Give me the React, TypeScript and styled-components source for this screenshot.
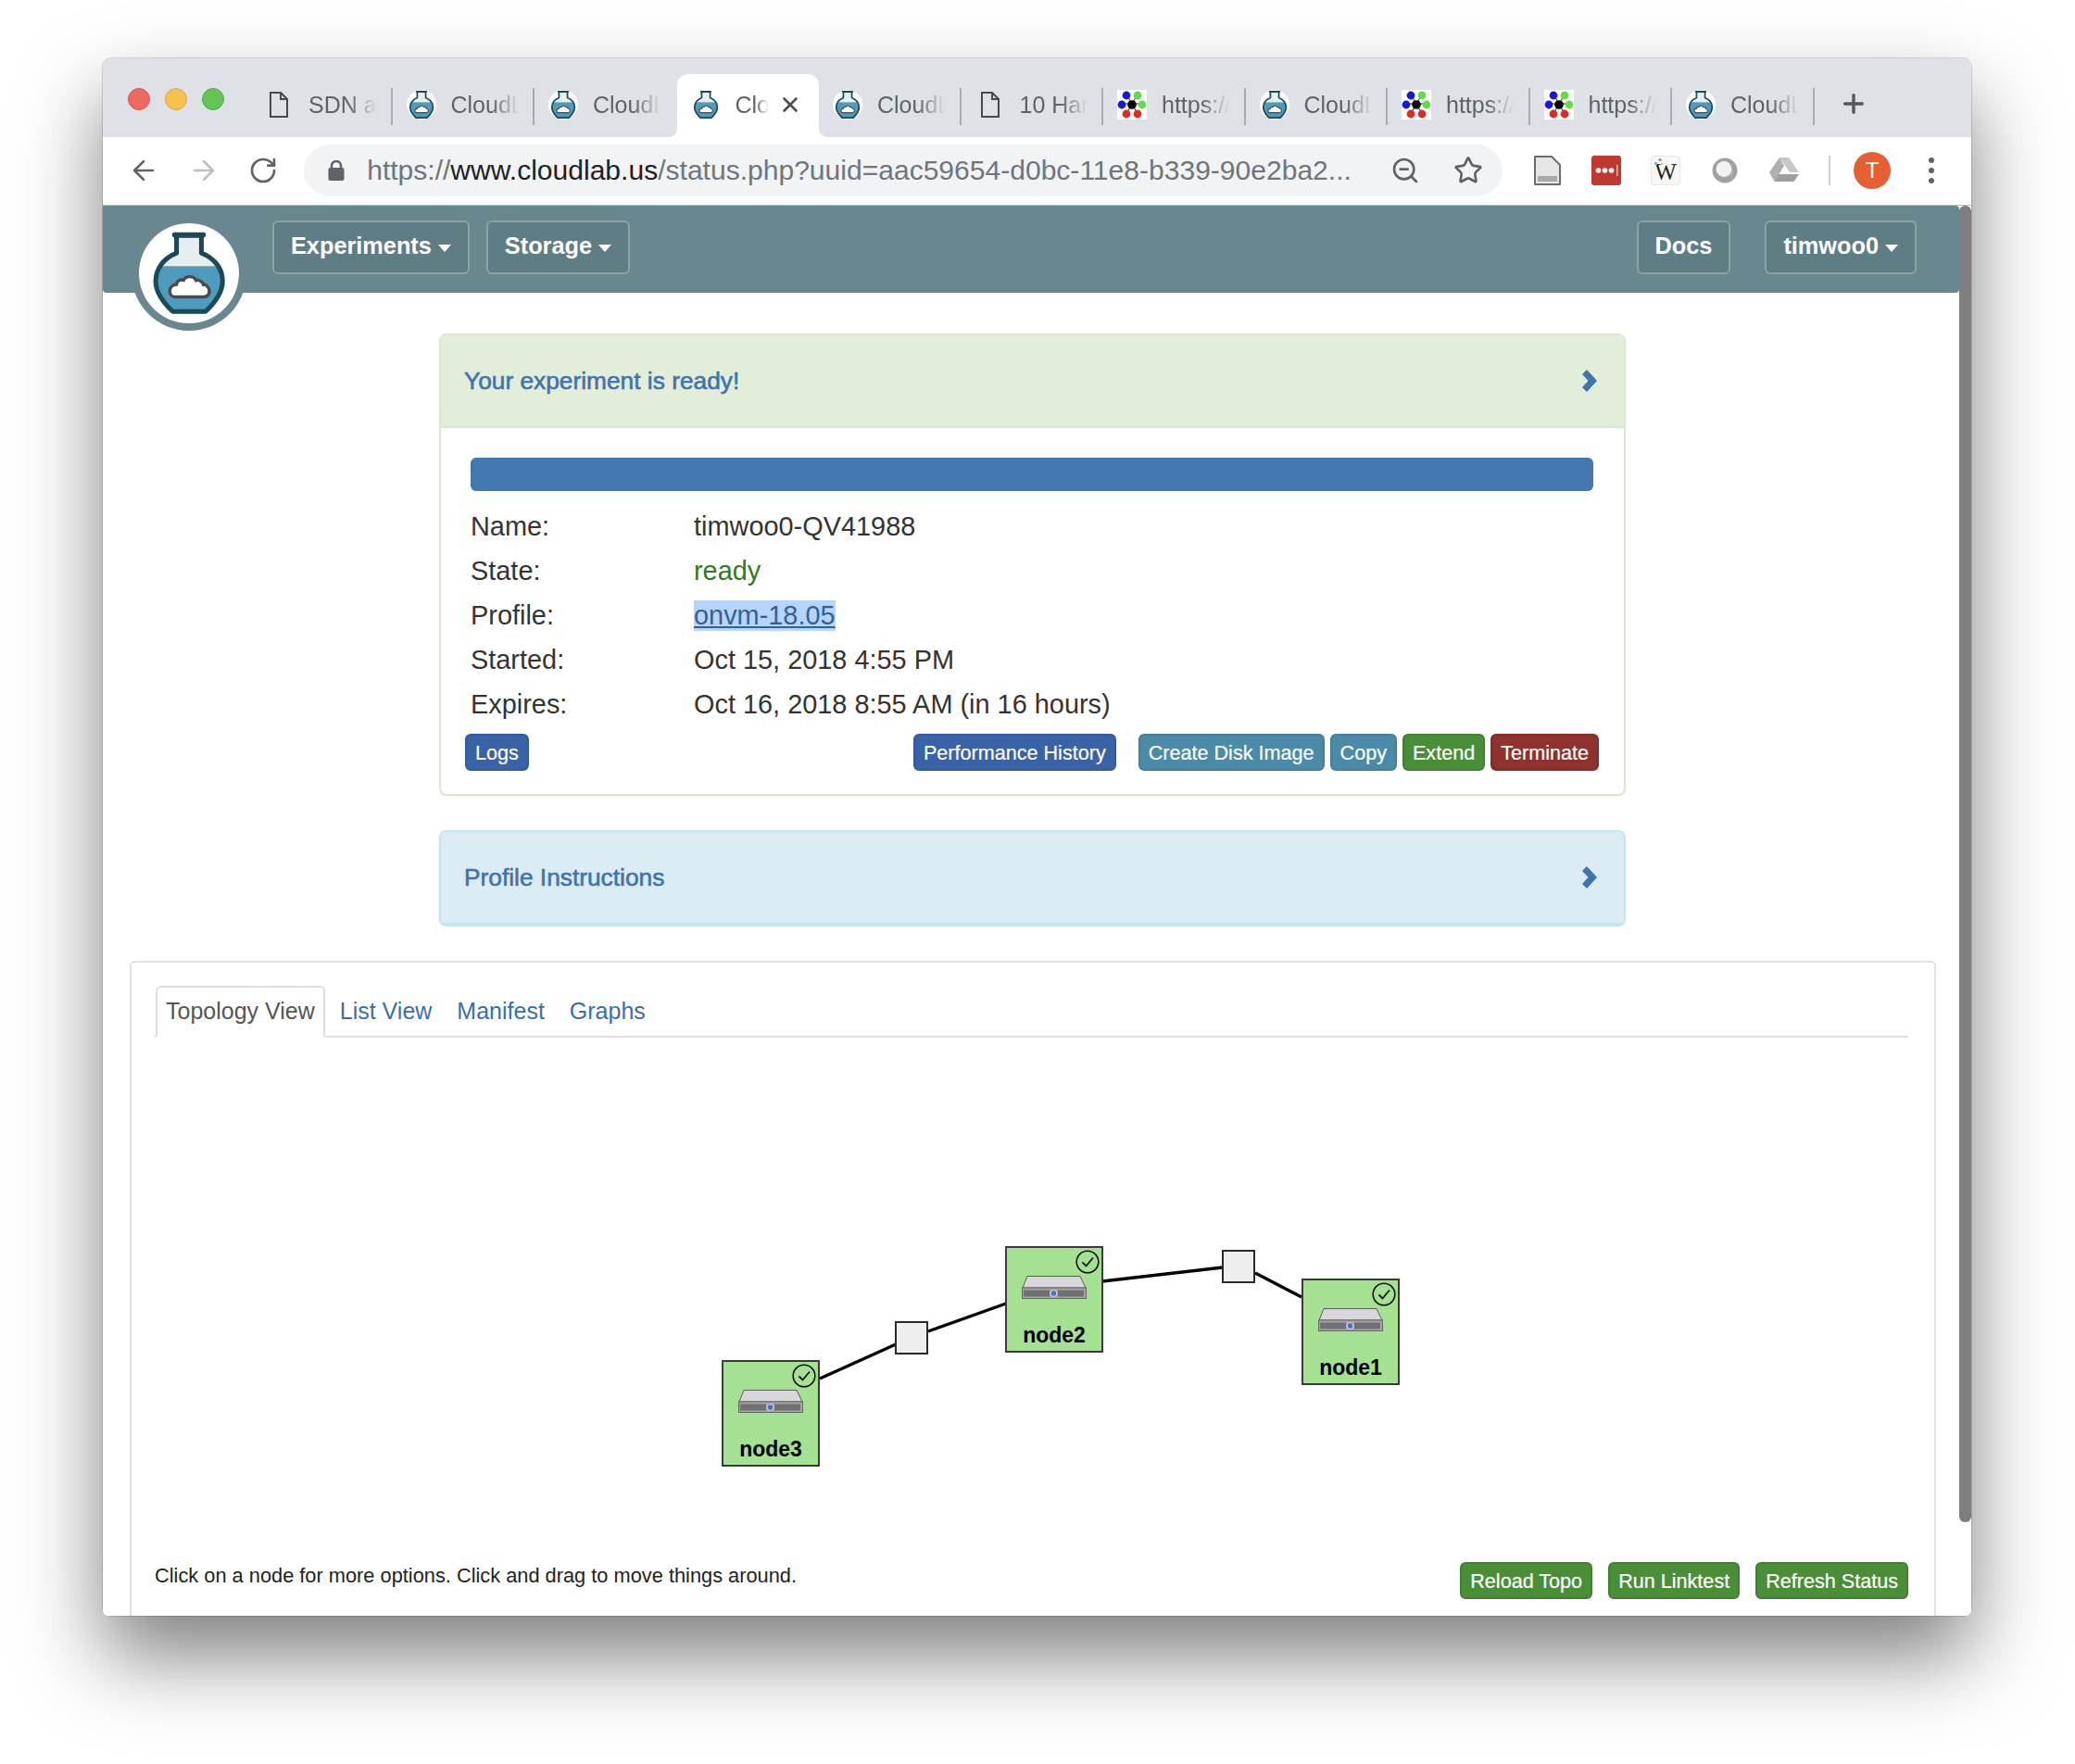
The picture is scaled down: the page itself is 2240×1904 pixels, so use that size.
import React from "react";
import styled, { createGlobalStyle } from "styled-components";
import { ArrowLeft, ArrowRight, RotateCw, ZoomOut, Star, X, Plus } from "lucide-react";

const Global = createGlobalStyle`
  html, body { margin: 0; padding: 0; background: #fff; }
  body { font-family: "Liberation Sans", Arial, sans-serif; color: #333; overflow: hidden; }
`;

const Stage = styled.div`
  width: 2240px;
  height: 1904px;
  padding: 63px 0 0 111px;
  box-sizing: border-box;
`;
const Win = styled.div`
  position: relative;
  width: 2017px;
  height: 1681px;
  border-radius: 10px 10px 6px 6px;
  overflow: hidden;
  display: flex;
  flex-direction: column;
`;
const WinShadow = styled.div`
  width: 2017px;
  height: 1681px;
  border-radius: 10px;
  box-shadow: 0 44px 88px rgba(0, 0, 0, 0.5), 0 0 0 1px rgba(0, 0, 0, 0.14);
`;

/* ---------- tab strip ---------- */
const TabStrip = styled.div`
  height: 85px;
  flex: none;
  background: #dee1e6;
  display: flex;
  align-items: flex-end;
  padding-left: 159px;
  position: relative;
`;
const Lights = styled.div`
  position: absolute;
  left: 27px;
  top: 32px;
  display: flex;
  gap: 16px;
`;
const Light = styled.span<{ $c: string; $b: string }>`
  width: 24px;
  height: 24px;
  border-radius: 50%;
  box-sizing: border-box;
  background: ${(p) => p.$c};
  border: 1px solid ${(p) => p.$b};
`;
const Tab = styled.div<{ $active?: boolean; $sep?: boolean }>`
  position: relative;
  width: 153.5px;
  height: 68px;
  flex: none;
  display: flex;
  align-items: center;
  padding: 0 0 2px 15px;
  box-sizing: border-box;
  background: ${(p) => (p.$active ? "#fff" : "transparent")};
  border-radius: 12px 12px 0 0;
  ${(p) =>
    p.$sep
      ? `&::after { content: ""; position: absolute; right: 0; top: 15px; width: 2px; height: 40px; background: #a9acb1; }`
      : ""}
  ${(p) =>
    p.$active
      ? `&::before { content: ""; position: absolute; left: -10px; right: -10px; bottom: 0; height: 12px;
          background:
            radial-gradient(circle at 0 0, #dee1e6 10px, #fff 10.5px) left bottom / 10px 10px no-repeat,
            radial-gradient(circle at 100% 0, #dee1e6 10px, #fff 10.5px) right bottom / 10px 10px no-repeat; }`
      : ""}
`;
const IconSlot = styled.span`
  width: 32px;
  height: 32px;
  flex: none;
  display: flex;
  align-items: center;
  justify-content: center;
  position: relative;
`;
const FavCircle = styled(IconSlot)`
  background: #fff;
  border-radius: 50%;
`;
const TabTitle = styled.span<{ $w: number }>`
  margin-left: 16px;
  width: ${(p) => p.$w}px;
  overflow: hidden;
  white-space: nowrap;
  font-size: 25px;
  line-height: 32px;
  color: #5f6368;
  position: relative;
  -webkit-mask-image: linear-gradient(to right, #000 60%, transparent 100%);
  mask-image: linear-gradient(to right, #000 60%, transparent 100%);
`;
const TabClose = styled.span`
  margin-left: 10px;
  display: flex;
  color: #4a4d52;
  position: relative;
`;
const NewTab = styled.span`
  width: 84px;
  height: 68px;
  display: flex;
  align-items: center;
  justify-content: center;
  padding-bottom: 4px;
  box-sizing: border-box;
  color: #54575c;
`;

/* ---------- toolbar ---------- */
const Toolbar = styled.div`
  height: 74px;
  flex: none;
  box-sizing: border-box;
  background: #fff;
  border-bottom: 1px solid #b9babc;
  display: flex;
  align-items: center;
  padding: 0 0 2px 12px;
`;
const NavSlot = styled.span<{ $dim?: boolean }>`
  width: 64.4px;
  flex: none;
  display: flex;
  justify-content: center;
  color: ${(p) => (p.$dim ? "#bcbec1" : "#5f6368")};
`;
const Omnibox = styled.div`
  margin-left: 12px;
  width: 1294px;
  height: 56px;
  flex: none;
  border-radius: 28px;
  background: #f1f3f4;
  display: flex;
  align-items: center;
  padding-left: 26px;
  box-sizing: border-box;
  color: #5f6368;
`;
const Url = styled.span`
  margin-left: 24px;
  width: 1087px;
  flex: none;
  white-space: nowrap;
  font-size: 30.05px;
  color: #70757a;
`;
const Domain = styled.span`
  color: #202124;
`;
const OmniIcon = styled.span`
  width: 68px;
  flex: none;
  display: flex;
  justify-content: center;
`;
const Extensions = styled.div`
  margin-left: 32px;
  display: flex;
  align-items: center;
  gap: 32px;
`;
const ExtDivider = styled.span`
  width: 2px;
  height: 32px;
  background: #cfd0d2;
`;
const Tile = styled.span`
  position: relative;
  width: 32px;
  height: 32px;
  box-sizing: border-box;
  padding-top: 4px;
  border: 1px solid #e7e7e3;
  border-radius: 4px;
  background: #f7f7f4;
  display: flex;
  align-items: center;
  justify-content: center;
  font-family: "Liberation Serif", serif;
  font-size: 25px;
  color: #222;
  &::before {
    content: "";
    position: absolute;
    left: 3px;
    top: 2px;
    width: 9px;
    height: 8px;
    background:
      radial-gradient(circle at 1.5px 5.5px, #6ec3e8 1.5px, transparent 2px),
      radial-gradient(circle at 6px 1.5px, #c77fc7 1.5px, transparent 2px),
      radial-gradient(circle at 8px 6px, #e8c76e 1.2px, transparent 1.7px);
  }
`;
const Avatar = styled.span`
  width: 40px;
  height: 40px;
  border-radius: 50%;
  background: #e55f33;
  color: #fff;
  font-size: 24px;
  display: flex;
  align-items: center;
  justify-content: center;
  margin-left: -7px;
`;
const Dots = styled.span`
  display: flex;
  flex-direction: column;
  gap: 5px;
  margin-left: 9px;
  & > i {
    width: 6px;
    height: 6px;
    border-radius: 50%;
    background: #5f6368;
  }
`;

/* ---------- page ---------- */
const Page = styled.div`
  flex: none;
  position: relative;
  width: 2004px;
  min-height: 0;
  background: #fff;
`;
const NavBar = styled.div`
  height: 94px;
  background: #68878f;
  border-radius: 0 4px 4px 4px;
  display: flex;
  align-items: flex-start;
  padding: 16px 46px 0 183px;
  box-sizing: border-box;
  gap: 18px;
`;
const NavBtn = styled.div`
  height: 58px;
  box-sizing: border-box;
  padding: 0 18px 3px;
  display: flex;
  align-items: center;
  gap: 7px;
  background: #5f7d85;
  border: 2px solid #8aa2a8;
  border-radius: 6px;
  color: #fff;
  font-size: 25.3px;
  font-weight: 700;
`;
const Caret = styled.i`
  width: 0;
  height: 0;
  margin-top: 4px;
  border-left: 7px solid transparent;
  border-right: 7px solid transparent;
  border-top: 8px solid #fff;
`;
const NavRight = styled.div`
  margin-left: auto;
  display: flex;
  gap: 37px;
`;
const LogoRing = styled.div`
  position: absolute;
  left: 31px;
  top: 11px;
  width: 124px;
  height: 124px;
  border-radius: 50%;
  background: #68878f;
  display: flex;
  align-items: center;
  justify-content: center;
`;
const LogoDisc = styled.div`
  width: 108px;
  height: 108px;
  border-radius: 50%;
  background: #fff;
  display: flex;
  align-items: center;
  justify-content: center;
`;
const Column = styled.div`
  width: 1281px;
  margin: 44px 0 0 363px;
`;
const Panel = styled.div<{ $tone: string }>`
  border: 2px solid ${(p) => p.$tone};
  border-radius: 8px;
  background: #fff;
  box-shadow: 0 1px 2px rgba(0, 0, 0, 0.05);
`;
const PanelHead = styled.div<{ $bg: string; $h: number }>`
  height: ${(p) => p.$h}px;
  background: ${(p) => p.$bg};
  border-radius: 6px 6px 0 0;
  display: flex;
  align-items: center;
  justify-content: space-between;
  padding: 0 29px 0 25px;
  box-sizing: border-box;
  color: #3f74ad;
  font-size: 26.3px;
  -webkit-text-stroke: 0.6px #3f74ad;
`;
const GreenHead = styled(PanelHead)`
  border-bottom: 2px solid #d9e8cc;
`;
const InfoPanel = styled(Panel)`
  margin-top: 37px;
  border-bottom-width: 4px;
`;
const PanelBody = styled.div`
  padding: 32px 33px 25px 32px;
`;
const Progress = styled.div`
  height: 36px;
  background: #4478b0;
  border-radius: 6px;
  margin-bottom: 14px;
`;
const Row = styled.div`
  display: grid;
  grid-template-columns: 241px 1fr;
  height: 48px;
  align-items: center;
  font-size: 28.9px;
  color: #333;
`;
const Ready = styled.span`
  color: #2e7d1a;
`;
const Selected = styled.a`
  justify-self: start;
  background: #b5d5fc;
  color: #34609a;
  text-decoration: underline;
  line-height: 33px;
`;
const ActionRow = styled.div`
  display: flex;
  gap: 6px;
  margin: 8px -6px 0 -6px;
`;
const Btn = styled.span<{ $bg: string; $edge: string }>`
  height: 40px;
  box-sizing: border-box;
  padding: 1px 9px 0;
  display: flex;
  align-items: center;
  justify-content: center;
  background: ${(p) => p.$bg};
  border: 2px solid ${(p) => p.$edge};
  border-radius: 6px;
  color: #fff;
  font-size: 21.6px;
  -webkit-text-stroke: 0.2px #fff;
  white-space: nowrap;
`;
const Spacer = styled.span<{ $w?: number }>`
  ${(p) => (p.$w ? `width: ${p.$w}px;` : "flex: 1;")}
`;
const TopoPanel = styled.div`
  margin: 37px 0 0 29px;
  width: 1950px;
  height: 800px;
  box-sizing: border-box;
  border: 2px solid #e1e1e1;
  border-radius: 6px;
  padding: 25px 28px 0 25px;
`;
const TabBar = styled.div`
  height: 56px;
  box-sizing: border-box;
  border-bottom: 2px solid #ddd;
  display: flex;
  font-size: 25px;
  padding-left: 1px;
`;
const PageTab = styled.span<{ $active?: boolean }>`
  height: 56px;
  box-sizing: border-box;
  padding: 0 9px 2px;
  margin-right: 5px;
  display: flex;
  align-items: center;
  border: 2px solid ${(p) => (p.$active ? "#ddd" : "transparent")};
  border-bottom-color: ${(p) => (p.$active ? "#fff" : "transparent")};
  border-radius: 6px 6px 0 0;
  color: ${(p) => (p.$active ? "#555" : "#3a6ea5")};
  background: ${(p) => (p.$active ? "#fff" : "transparent")};
`;
const Canvas = styled.div`
  position: relative;
  height: 566px;
`;
const Wires = styled.svg`
  position: absolute;
  inset: 0;
  width: 100%;
  height: 100%;
`;
const Node = styled.div<{ $x: number; $y: number }>`
  position: absolute;
  left: ${(p) => p.$x - 167}px;
  top: ${(p) => p.$y - 1120}px;
  width: 106px;
  height: 115px;
  box-sizing: border-box;
  background: #a4e192;
  border: 2px solid #3a3a3a;
  display: flex;
  flex-direction: column;
  align-items: center;
  padding-top: 30px;
`;
const NodeLabel = styled.span`
  margin-top: 25px;
  font-size: 23px;
  line-height: 28px;
  font-weight: 700;
  color: #000;
`;
const Check = styled.svg`
  position: absolute;
  right: 2px;
  top: 2px;
`;
const Lan = styled.div<{ $x: number; $y: number }>`
  position: absolute;
  left: ${(p) => p.$x - 167}px;
  top: ${(p) => p.$y - 1120}px;
  width: 36px;
  height: 36px;
  box-sizing: border-box;
  background: #eee;
  border: 2px solid #2a2a2a;
`;
const Footer = styled.div`
  display: flex;
  gap: 17px;
`;
const Hint = styled.span`
  flex: 1;
  font-size: 21.8px;
  line-height: 30px;
  color: #222;
`;
const ScrollThumb = styled.div`
  position: absolute;
  right: 0;
  top: 0;
  width: 13px;
  height: 1421px;
  background: #7f7f7f;
  border-radius: 6px;
`;
const PageRow = styled.div`
  flex: 1;
  min-height: 0;
  display: flex;
  position: relative;
  overflow: hidden;
  background: #fff;
`;

/* ---------- drawings ---------- */
const FLASK_D = "M182 98V155C140 172 115 205 115 245C115 280 135 310 170 343H275C310 310 330 280 330 245C330 205 305 172 262 155V98Z";

const Flask = ({ size }: { size: number }) => (
  <svg width={size} height={size} viewBox="82 80 280 280">
    <defs>
      <clipPath id="flask-body">
        <path d={FLASK_D} />
      </clipPath>
    </defs>
    <path d={FLASK_D} fill="#e8eeee" />
    <rect x="100" y="197" width="244" height="160" fill="#4e9bbd" clipPath="url(#flask-body)" />
    <path d={FLASK_D} fill="none" stroke="#1b4a56" strokeWidth="15" strokeLinejoin="round" />
    <rect x="168" y="88" width="108" height="17" rx="7" fill="#1b4a56" />
    <path d="M178 296H268C285 296 292 280 285 268C280 258 272 255 268 256C266 245 252 240 245 243C238 228 212 226 205 242C195 238 182 245 182 256C170 256 160 265 160 277C160 288 168 296 178 296Z" fill="#fff" stroke="#4a4a4a" strokeWidth="10" />
  </svg>
);

const FileIcon = () => (
  <svg width="20" height="28" viewBox="0 0 20 28" fill="none" stroke="#47494d" strokeWidth="2">
    <path d="M1 1H12L19 8V27H1Z" />
    <path d="M12 1V8H19" />
  </svg>
);

const NetIcon = () => (
  <svg width="32" height="32" viewBox="0 0 32 32">
    <rect width="32" height="32" fill="#fff" />
    <path d="M10 5L16 15L22 5M5 15H27M10 26L16 15L22 26" stroke="#222" strokeWidth="1" fill="none" />
    <circle cx="10" cy="6" r="4.4" fill="#1616e0" />
    <circle cx="22" cy="6" r="4.4" fill="#5fdc48" />
    <circle cx="5" cy="16" r="4.4" fill="#1616e0" />
    <circle cx="16" cy="16" r="4.8" fill="#000" />
    <circle cx="27" cy="16" r="4.4" fill="#5fdc48" />
    <circle cx="10" cy="26" r="4.4" fill="#e02a20" />
    <circle cx="22" cy="26" r="4.4" fill="#e02a20" />
  </svg>
);

const LockIcon = () => (
  <svg width="18" height="22" viewBox="0 0 18 22" fill="#5f6368">
    <rect x="0.5" y="8" width="17" height="14" rx="2" />
    <path d="M4 9V6a5 5 0 0 1 10 0v3" fill="none" stroke="#5f6368" strokeWidth="2.4" />
  </svg>
);

const Chevron = () => (
  <svg width="16" height="24" viewBox="0 0 16 24" fill="#3f74ad">
    <path d="M5 0L16 12L5 24L0 19L6.5 12L0 5Z" />
  </svg>
);

const Server = () => (
  <svg width="70" height="25" viewBox="0 0 70 25">
    <path d="M6 0.5H63L69 13H1Z" fill="#d9d7db" stroke="#5a5a5a" />
    <rect x="0.5" y="13" width="69" height="11.5" fill="#a6a6a6" stroke="#666" />
    <path
      d="M3 15.5v7M5 15.5v7M7 15.5v7M9 15.5v7M11 15.5v7M13 15.5v7M15 15.5v7M17 15.5v7M19 15.5v7M21 15.5v7M23 15.5v7M25 15.5v7M27 15.5v7M29 15.5v7M40 15.5v7M42 15.5v7M44 15.5v7M46 15.5v7M48 15.5v7M50 15.5v7M52 15.5v7M54 15.5v7M56 15.5v7M58 15.5v7M60 15.5v7M62 15.5v7M64 15.5v7M66 15.5v7"
      stroke="#3c3c3c"
      strokeWidth="1"
    />
    <circle cx="34.5" cy="19" r="3.4" fill="#4a66e0" stroke="#ddd" strokeWidth="1" />
  </svg>
);

const CheckMark = () => (
  <Check width="26" height="26" viewBox="0 0 26 26" fill="none" stroke="#111" strokeWidth="1.6">
    <circle cx="13" cy="13" r="11.8" />
    <path d="M7.5 13.5L11.5 17.5L19 8.5" strokeWidth="1.8" />
  </Check>
);

const DocExt = () => (
  <svg width="32" height="32" viewBox="0 0 32 32">
    <path d="M3 1H21L30 10V31H3Z" fill="#e6e6e6" stroke="#6c6c6c" strokeWidth="2" strokeLinejoin="round" />
    <rect x="6" y="22" width="21" height="6" fill="#a9a9a9" />
  </svg>
);
const PassExt = () => (
  <svg width="32" height="32" viewBox="0 0 32 32">
    <rect width="32" height="32" rx="3" fill="#c0392f" />
    <circle cx="7.5" cy="16" r="2.8" fill="#fff" />
    <circle cx="14.5" cy="16" r="2.8" fill="#fff" />
    <circle cx="21.5" cy="16" r="2.8" fill="#fff" />
    <rect x="27" y="10" width="1.4" height="12" fill="#f3d6d2" />
  </svg>
);
const RingExt = () => (
  <svg width="32" height="32" viewBox="0 0 32 32">
    <circle cx="16" cy="16" r="13.5" fill="#a2a2a2" />
    <circle cx="15" cy="14.5" r="8.4" fill="#f2f2f2" />
    <path d="M23.5 12a8.6 8.6 0 0 1-12.500 10.500a9 9 0 0 0 14-6z" fill="#c9c9c9" />
  </svg>
);
const DriveExt = () => (
  <svg width="32" height="32" viewBox="0 0 32 32">
    <path d="M11 2H21L32 18H22Z" fill="#c8c8c8" />
    <path d="M11 2L0 18L5.5 28L16 11Z" fill="#b0b0b0" />
    <path d="M10 20H32L26.5 28H5.5Z" fill="#9f9f9f" />
  </svg>
);

/* ---------- data ---------- */
const tabs = [
  { k: "file", t: "SDN and" },
  { k: "lab", t: "CloudLab" },
  { k: "lab", t: "CloudLab" },
  { k: "lab", t: "CloudLab", active: true },
  { k: "lab", t: "CloudLab" },
  { k: "file", t: "10 Hard" },
  { k: "net", t: "https://" },
  { k: "lab", t: "CloudLab" },
  { k: "net", t: "https://" },
  { k: "net", t: "https://" },
  { k: "lab", t: "CloudLab" },
];

const rows = [
  ["Name:", "timwoo0-QV41988"],
  ["State:", "ready"],
  ["Profile:", "onvm-18.05"],
  ["Started:", "Oct 15, 2018 4:55 PM"],
  ["Expires:", "Oct 16, 2018 8:55 AM (in 16 hours)"],
];

const BLUE = { $bg: "#3a62a6", $edge: "#335a99" };
const TEAL = { $bg: "#4a8ba9", $edge: "#44809c" };
const GREEN = { $bg: "#4a8f37", $edge: "#437f32" };
const RED = { $bg: "#8f322d", $edge: "#832c28" };

const nodes = [
  { n: "node3", x: 779, y: 1468 },
  { n: "node2", x: 1085, y: 1345 },
  { n: "node1", x: 1405, y: 1380 },
];

export default function App() {
  return (
    <Stage>
      <Global />
      <WinShadow>
        <Win>
          <TabStrip>
            <Lights>
              <Light $c="#ee6a5f" $b="#d9574d" />
              <Light $c="#f6c14f" $b="#dfa63c" />
              <Light $c="#62c655" $b="#50ad45" />
            </Lights>
            {tabs.map((tab, i) => (
              <Tab key={i} $active={tab.active} $sep={!tab.active && i !== 2}>
                {tab.k === "file" && (
                  <IconSlot>
                    <FileIcon />
                  </IconSlot>
                )}
                {tab.k === "net" && (
                  <IconSlot>
                    <NetIcon />
                  </IconSlot>
                )}
                {tab.k === "lab" && (
                  <FavCircle>
                    <Flask size={32} />
                  </FavCircle>
                )}
                <TabTitle $w={tab.active ? 36 : 73}>{tab.t}</TabTitle>
                {tab.active && (
                  <TabClose>
                    <X size={26} strokeWidth={2.4} />
                  </TabClose>
                )}
              </Tab>
            ))}
            <NewTab>
              <Plus size={32} strokeWidth={2.6} />
            </NewTab>
          </TabStrip>

          <Toolbar>
            <NavSlot>
              <ArrowLeft size={34} strokeWidth={1.9} />
            </NavSlot>
            <NavSlot $dim>
              <ArrowRight size={34} strokeWidth={1.9} />
            </NavSlot>
            <NavSlot>
              <RotateCw size={32} strokeWidth={2} />
            </NavSlot>
            <Omnibox>
              <LockIcon />
              <Url>
                https://<Domain>www.cloudlab.us</Domain>/status.php?uuid=aac59654-d0bc-11e8-b339-90e2ba2...
              </Url>
              <OmniIcon>
                <ZoomOut size={32} strokeWidth={2} />
              </OmniIcon>
              <OmniIcon>
                <Star size={32} strokeWidth={2} />
              </OmniIcon>
            </Omnibox>
            <Extensions>
              <DocExt />
              <PassExt />
              <Tile>W</Tile>
              <RingExt />
              <DriveExt />
              <ExtDivider />
              <Avatar>T</Avatar>
              <Dots>
                <i />
                <i />
                <i />
              </Dots>
            </Extensions>
          </Toolbar>

          <PageRow>
            <Page>
              <NavBar>
                <NavBtn>
                  Experiments <Caret />
                </NavBtn>
                <NavBtn>
                  Storage <Caret />
                </NavBtn>
                <NavRight>
                  <NavBtn>Docs</NavBtn>
                  <NavBtn>
                    timwoo0 <Caret />
                  </NavBtn>
                </NavRight>
              </NavBar>
              <LogoRing>
                <LogoDisc>
                  <Flask size={94} />
                </LogoDisc>
              </LogoRing>

              <Column>
                <Panel $tone="#dbe8cf">
                  <GreenHead $bg="#e2eeda" $h={100}>
                    Your experiment is ready!
                    <Chevron />
                  </GreenHead>
                  <PanelBody>
                    <Progress />
                    {rows.map(([label, value]) => (
                      <Row key={label}>
                        <span>{label}</span>
                        {label === "State:" ? (
                          <Ready>{value}</Ready>
                        ) : label === "Profile:" ? (
                          <Selected>{value}</Selected>
                        ) : (
                          <span>{value}</span>
                        )}
                      </Row>
                    ))}
                    <ActionRow>
                      <Btn {...BLUE}>Logs</Btn>
                      <Spacer />
                      <Btn {...BLUE}>Performance History</Btn>
                      <Spacer $w={12} />
                      <Btn {...TEAL}>Create Disk Image</Btn>
                      <Btn {...TEAL}>Copy</Btn>
                      <Btn {...GREEN}>Extend</Btn>
                      <Btn {...RED}>Terminate</Btn>
                    </ActionRow>
                  </PanelBody>
                </Panel>
                <InfoPanel $tone="#c3e5ef">
                  <PanelHead $bg="#dcecf5" $h={98}>
                    Profile Instructions
                    <Chevron />
                  </PanelHead>
                </InfoPanel>
              </Column>

              <TopoPanel>
                <TabBar>
                  <PageTab $active>Topology View</PageTab>
                  <PageTab>List View</PageTab>
                  <PageTab>Manifest</PageTab>
                  <PageTab>Graphs</PageTab>
                </TabBar>
                <Canvas>
                  <Wires viewBox="167 1120 1893 566" preserveAspectRatio="xMinYMin meet">
                    <g stroke="#000" strokeWidth="3.4">
                      <line x1="885" y1="1488" x2="967" y2="1451" />
                      <line x1="1002" y1="1437" x2="1086" y2="1407" />
                      <line x1="1190" y1="1383" x2="1320" y2="1368" />
                      <line x1="1355" y1="1374" x2="1405" y2="1400" />
                    </g>
                  </Wires>
                  <Lan $x={966} $y={1426} />
                  <Lan $x={1319} $y={1349} />
                  {nodes.map((n) => (
                    <Node key={n.n} $x={n.x} $y={n.y}>
                      <CheckMark />
                      <Server />
                      <NodeLabel>{n.n}</NodeLabel>
                    </Node>
                  ))}
                </Canvas>
                <Footer>
                  <Hint>Click on a node for more options. Click and drag to move things around.</Hint>
                  <Btn {...GREEN}>Reload Topo</Btn>
                  <Btn {...GREEN}>Run Linktest</Btn>
                  <Btn {...GREEN}>Refresh Status</Btn>
                </Footer>
              </TopoPanel>
            </Page>
            <ScrollThumb />
          </PageRow>
        </Win>
      </WinShadow>
    </Stage>
  );
}
